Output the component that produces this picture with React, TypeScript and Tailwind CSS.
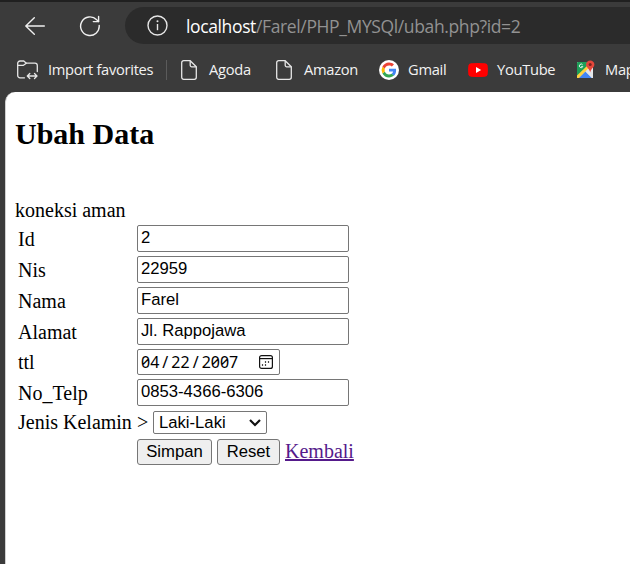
import type { ReactNode } from 'react';

const serif = "font-['Liberation_Serif','Times_New_Roman',serif]";
const sans = "font-['Liberation_Sans',Arial,sans-serif]";

function PageIcon() {
  return (
    <svg width="16" height="20" viewBox="0 0 16 20" fill="none" stroke="#e6e6e6" strokeWidth="1.3" strokeLinejoin="round" className="shrink-0">
      <path d="M2.7.7H9.2L15.3 6.8V17.3A2 2 0 0 1 13.3 19.3H2.7A2 2 0 0 1 .7 17.3V2.7A2 2 0 0 1 2.7.7Z" />
      <path d="M9.2.7V5.3A1.5 1.5 0 0 0 10.7 6.8H15.3" />
    </svg>
  );
}

function GoogleIcon() {
  return (
    <svg width="20" height="20" viewBox="0 0 20 20" className="shrink-0">
      <circle cx="10" cy="10" r="10" fill="#fff" />
      <g transform="translate(2.6 2.6) scale(.617)">
        <path fill="#4285f4" d="M23.5 12.3c0-.9-.1-1.5-.2-2.2H12v4.5h6.6c-.2 1.1-.9 2.7-2.5 3.8l3.9 3c2.3-2.2 3.5-5.300 3.500-9.100Z" />
        <path fill="#34a853" d="M12 24c3.200 0 6-1.100 8-2.900l-3.900-3c-1 .7-2.400 1.200-4.100 1.200-3.100 0-5.800-2.100-6.700-4.900l-4 3.100C3.300 21.300 7.300 24 12 24Z" />
        <path fill="#fbbc05" d="M5.300 14.400a7.300 7.300 0 0 1 0-4.700l-4-3.100a12 12 0 0 0 0 10.900Z" />
        <path fill="#ea4335" d="M12 4.700c2.200 0 3.700 1 4.600 1.800L20 3.100C18 1.200 15.200 0 12 0 7.300 0 3.300 2.700 1.300 6.600l4 3.100C6.200 6.800 8.900 4.700 12 4.700Z" />
      </g>
    </svg>
  );
}

function YouTubeIcon() {
  return (
    <svg width="20" height="14" viewBox="0 0 20 14" className="shrink-0">
      <path fill="#f00" d="M3 .3Q10-.2 17 .3Q19.300.5 19.600 2.500Q20.200 7 19.600 11.500Q19.300 13.500 17 13.700Q10 14.200 3 13.700Q.7 13.500.4 11.500Q-.2 7 .4 2.500Q.7.5 3 .3Z" />
      <path fill="#fff" d="M8 4L13.200 7L8 10Z" />
    </svg>
  );
}

function MapsIcon() {
  return (
    <svg width="19" height="20" viewBox="0 0 19 20" className="shrink-0">
      <rect x="1" y="2" width="16" height="16" rx="1" fill="#e8eaed" />
      <path d="M2 2H13L10 10L1 18V3Q1 2 2 2Z" fill="#1e9e58" />
      <path d="M1 15.500L12 5L14 7L3.500 18H1Z" fill="#ffd23f" />
      <path d="M3 18L9.500 11.500L16 18Z" fill="#4285f4" />
      <path d="M9.500 11.500L12.500 8.500L17 13V18H16Z" fill="#e3e5e8" />
      <path d="M6.600 4.800A1.800 1.800 0 1 0 6.800 6.600H5.200" fill="none" stroke="#e5f4eb" strokeWidth="1" />
      <path d="M14.200.4A4.200 4.200 0 0 0 10 4.600C10 7.500 13.500 8.500 14.200 12.500C14.900 8.500 18.400 7.500 18.400 4.600A4.200 4.200 0 0 0 14.200.4Z" fill="#e5473b" />
      <circle cx="14.200" cy="4.500" r="1.500" fill="#7a231f" />
    </svg>
  );
}

function Toolbar() {
  return (
    <div className="flex h-[42px] w-full pt-[5px]">
      <div className="flex w-[125px] shrink-0 items-center pl-[25px]">
        <svg width="20" height="18" viewBox="0 0 20 18" fill="none" stroke="#f0f0f0" strokeWidth="1.4" strokeLinecap="round" strokeLinejoin="round">
          <path d="M19.300 9H.8M9.300.8L.8 9L9.300 17.200" />
        </svg>
        <svg width="22" height="22" viewBox="0 0 22 22" fill="none" stroke="#f0f0f0" strokeWidth="1.4" strokeLinecap="round" strokeLinejoin="round" className="ml-[34px]">
          <path d="M20.200 10.400A9.300 9.300 0 1 1 17.700 4.800L19.500 6.500" />
          <path d="M19.600 1.500V6.600H14.300" />
        </svg>
      </div>
      <div className="flex h-[37px] flex-1 items-center rounded-l-full bg-[#2b2b2b] pl-[22px]">
        <svg width="21" height="21" viewBox="0 0 21 21" fill="none" stroke="#e6e6e6" strokeWidth="1.4" className="shrink-0">
          <circle cx="10.500" cy="10.500" r="9.500" />
          <path d="M10.500 9V15.200" />
          <circle cx="10.500" cy="6.300" r="1" fill="#e6e6e6" stroke="none" />
        </svg>
        <span className="ml-[18px] whitespace-nowrap font-['Open_Sans',sans-serif] text-[17.5px] leading-[24px] tracking-[-0.37px] text-[#929292]">
          <span className="text-white">localhost</span>/Farel/PHP_MYSQl/ubah.php?id=2
        </span>
      </div>
    </div>
  );
}

function Label({ width, children }: { width: string; children: ReactNode }) {
  return <span className={`${width} shrink-0 whitespace-nowrap`}>{children}</span>;
}

function Favorites() {
  return (
    <div className="flex h-[48px] items-center overflow-hidden pt-[3px] pl-[17px] font-['Open_Sans',sans-serif] text-[14.7px] tracking-[-0.3px] text-[#f2f2f2]">
      <svg width="21" height="20" viewBox="0 0 21 20" fill="none" stroke="#e6e6e6" strokeWidth="1.3" strokeLinecap="round" strokeLinejoin="round" className="mr-[10px] shrink-0">
        <path d="M7.500 17.800H3A2.300 2.300 0 0 1 .7 15.500V3.300A2.300 2.300 0 0 1 3 1H6.800L9.300 3.200H18A2.300 2.300 0 0 1 20.300 5.500V11.500" />
        <path d="M.8 5.300H6.500L9.300 3.200" />
        <path d="M10.500 16H19.800M12.800 13.500L10.300 16L12.800 18.500M17.500 13.500L20 16L17.500 18.500" />
      </svg>
      <Label width="w-[118px]">Import favorites</Label>
      <span className="mr-[14px] h-[20px] w-px shrink-0 bg-[#5b5b5b]" />
      <PageIcon />
      <span className="w-[12px] shrink-0" />
      <Label width="w-[67px]">Agoda</Label>
      <PageIcon />
      <span className="w-[12px] shrink-0" />
      <Label width="w-[75px]">Amazon</Label>
      <GoogleIcon />
      <span className="w-[9px] shrink-0" />
      <Label width="w-[60px]">Gmail</Label>
      <YouTubeIcon />
      <span className="w-[9px] shrink-0" />
      <Label width="w-[79px]">YouTube</Label>
      <MapsIcon />
      <span className="w-[10px] shrink-0" />
      <Label width="w-[40px]">Maps</Label>
    </div>
  );
}

function Field({ label, value }: { label: string; value: string }) {
  return (
    <div className="flex h-[31px] items-start">
      <label className="w-[122px] pt-[2px] pl-[3px] leading-[24px]">{label}</label>
      <input defaultValue={value} className={`h-[27px] w-[212px] rounded-[2px] border border-[#767676] bg-white px-[3px] pb-[2px] ${sans} text-[16.67px] outline-none`} />
    </div>
  );
}

function CalendarIcon() {
  return (
    <svg width="14" height="14" viewBox="0 0 14 14" fill="none" stroke="#111" strokeWidth="1.200">
      <rect x=".6" y=".6" width="12.800" height="12.800" rx="2" />
      <path d="M.6 3.600H13.400" />
      <path d="M5.900 7H7.100M8.900 7H10.100M2.900 10H4.100M5.900 10H7.100" strokeWidth="1.400" />
    </svg>
  );
}

export default function App() {
  return (
    <div className="h-[564px] w-[630px] overflow-hidden bg-[#3b3b3b]">
      <div className="h-[2px] bg-[#202020]" />
      <Toolbar />
      <Favorites />
      <main className={`ml-[5px] h-[472px] rounded-tl-[10px] border-l border-[#d0d0d0] bg-white pl-[9px] ${serif} text-[20px] text-black`}>
        <h2 className="pt-[24px] text-[30px] leading-[36px] font-bold">Ubah Data</h2>
        <p className="mt-[46px] leading-[24px]">koneksi aman</p>
        <form className="mt-[3px]">
          <Field label="Id" value="2" />
          <Field label="Nis" value="22959" />
          <Field label="Nama" value="Farel" />
          <Field label="Alamat" value="Jl. Rappojawa" />
          <div className="flex h-[30px] items-start">
            <label className="w-[122px] pt-[1px] pl-[3px] leading-[24px]">ttl</label>
            <div className="flex h-[26px] w-[143px] items-center justify-between rounded-[2px] border border-[#767676] pr-[6px] pl-[3px]">
              <div className="flex font-['Noto_Sans',sans-serif] text-[16px] leading-[24px] [font-feature-settings:'zero']">
                <span>04</span>
                <span className="w-[12px] text-center">/</span>
                <span>22</span>
                <span className="w-[12px] text-center">/</span>
                <span>2007</span>
              </div>
              <CalendarIcon />
            </div>
          </div>
          <Field label="No_Telp" value="0853-4366-6306" />
          <div className="flex h-[29px] items-start">
            <label className="w-[122px] pl-[3px] leading-[24px] whitespace-nowrap">Jenis Kelamin</label>
            <span className="w-[16px] leading-[24px]">&gt;</span>
            <div className={`mt-[1px] flex h-[23px] w-[114px] items-center justify-between rounded-[2px] border border-[#767676] pr-[5px] pl-[5px] ${sans} text-[16.67px] leading-[20px]`}>
              Laki-Laki
              <svg width="12" height="8" viewBox="0 0 12 8" fill="none" stroke="#111" strokeWidth="2.200">
                <path d="M1 1L6 6L11 1" />
              </svg>
            </div>
          </div>
          <div className="flex h-[26px] items-start pl-[122px]">
            <button type="button" className={`h-[26px] w-[75px] rounded-[3px] border border-[#767676] bg-[#efefef] ${sans} text-[16.67px] leading-[20px]`}>Simpan</button>
            <button type="button" className={`ml-[5px] h-[26px] w-[63px] rounded-[3px] border border-[#767676] bg-[#efefef] ${sans} text-[16.67px] leading-[20px]`}>Reset</button>
            <a href="#" className="ml-[5px] leading-[24px] text-[#551a8b] underline">Kembali</a>
          </div>
        </form>
      </main>
    </div>
  );
}
